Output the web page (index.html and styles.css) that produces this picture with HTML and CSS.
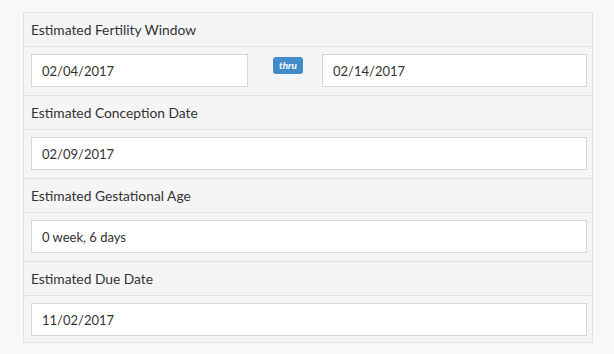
FILE: index.html
```html
<!DOCTYPE html>
<html lang="en">
<head>
    <meta charset="UTF-8">
    <title>Pregnancy Estimates</title>
    <link rel="stylesheet" href="styles.css">
</head>
<body>

<div class="panel">
    <div class="row-label">Estimated Fertility Window</div>
    <div class="row-field range">
        <input type="text" class="field field-start" value="02/04/2017" readonly>
        <div class="range-sep"><span class="badge">thru</span></div>
        <input type="text" class="field field-end" value="02/14/2017" readonly>
    </div>

    <div class="row-label">Estimated Conception Date</div>
    <div class="row-field">
        <input type="text" class="field" value="02/09/2017" readonly>
    </div>

    <div class="row-label">Estimated Gestational Age</div>
    <div class="row-field">
        <input type="text" class="field" value="0 week, 6 days" readonly>
    </div>

    <div class="row-label">Estimated Due Date</div>
    <div class="row-field last">
        <input type="text" class="field" value="11/02/2017" readonly>
    </div>
</div>

</body>
</html>
```

FILE: styles.css
```css
body {
    font-family: Lato, "Open Sans", Arial, sans-serif;
    background: #f8f8f8;
    margin: 0;
    padding: 12px 21px 0 23px;
    color: #333;
}

.panel {
    background: #f5f5f5;
    border: 1px solid #e1e1e1;
    border-top-color: #e6e6e6;
}

.row-label {
    height: 33px;
    line-height: 34px;
    padding: 0 7px;
    font-size: 13.8px;
    border-bottom: 1px solid #e3e3e3;
}

.row-field {
    padding: 7px 5px 8px 7px;
    border-bottom: 1px solid #e3e3e3;
}

.row-field.last {
    border-bottom: none;
    padding-bottom: 6px;
}

.field {
    display: block;
    box-sizing: border-box;
    width: 100%;
    height: 33px;
    padding: 0 10px;
    border: 1px solid #d6d6d6;
    border-radius: 0;
    background: white;
    font-family: Lato, "Open Sans", Arial, sans-serif;
    font-size: 13px;
    color: #333;
    outline: none;
}

.range {
    display: flex;
    align-items: flex-start;
}

.field-start {
    width: 217px;
    flex: none;
}

.field-end {
    flex: 1;
}

.range-sep {
    width: 74px;
    flex: none;
    display: flex;
    justify-content: center;
    padding-top: 3px;
    padding-left: 6px;
    box-sizing: border-box;
}

.badge {
    display: inline-block;
    background: #428bca;
    color: white;
    font-size: 10px;
    font-weight: bold;
    font-style: italic;
    line-height: 17px;
    height: 17px;
    padding: 0 6px;
    border-radius: 3px;
}
```
